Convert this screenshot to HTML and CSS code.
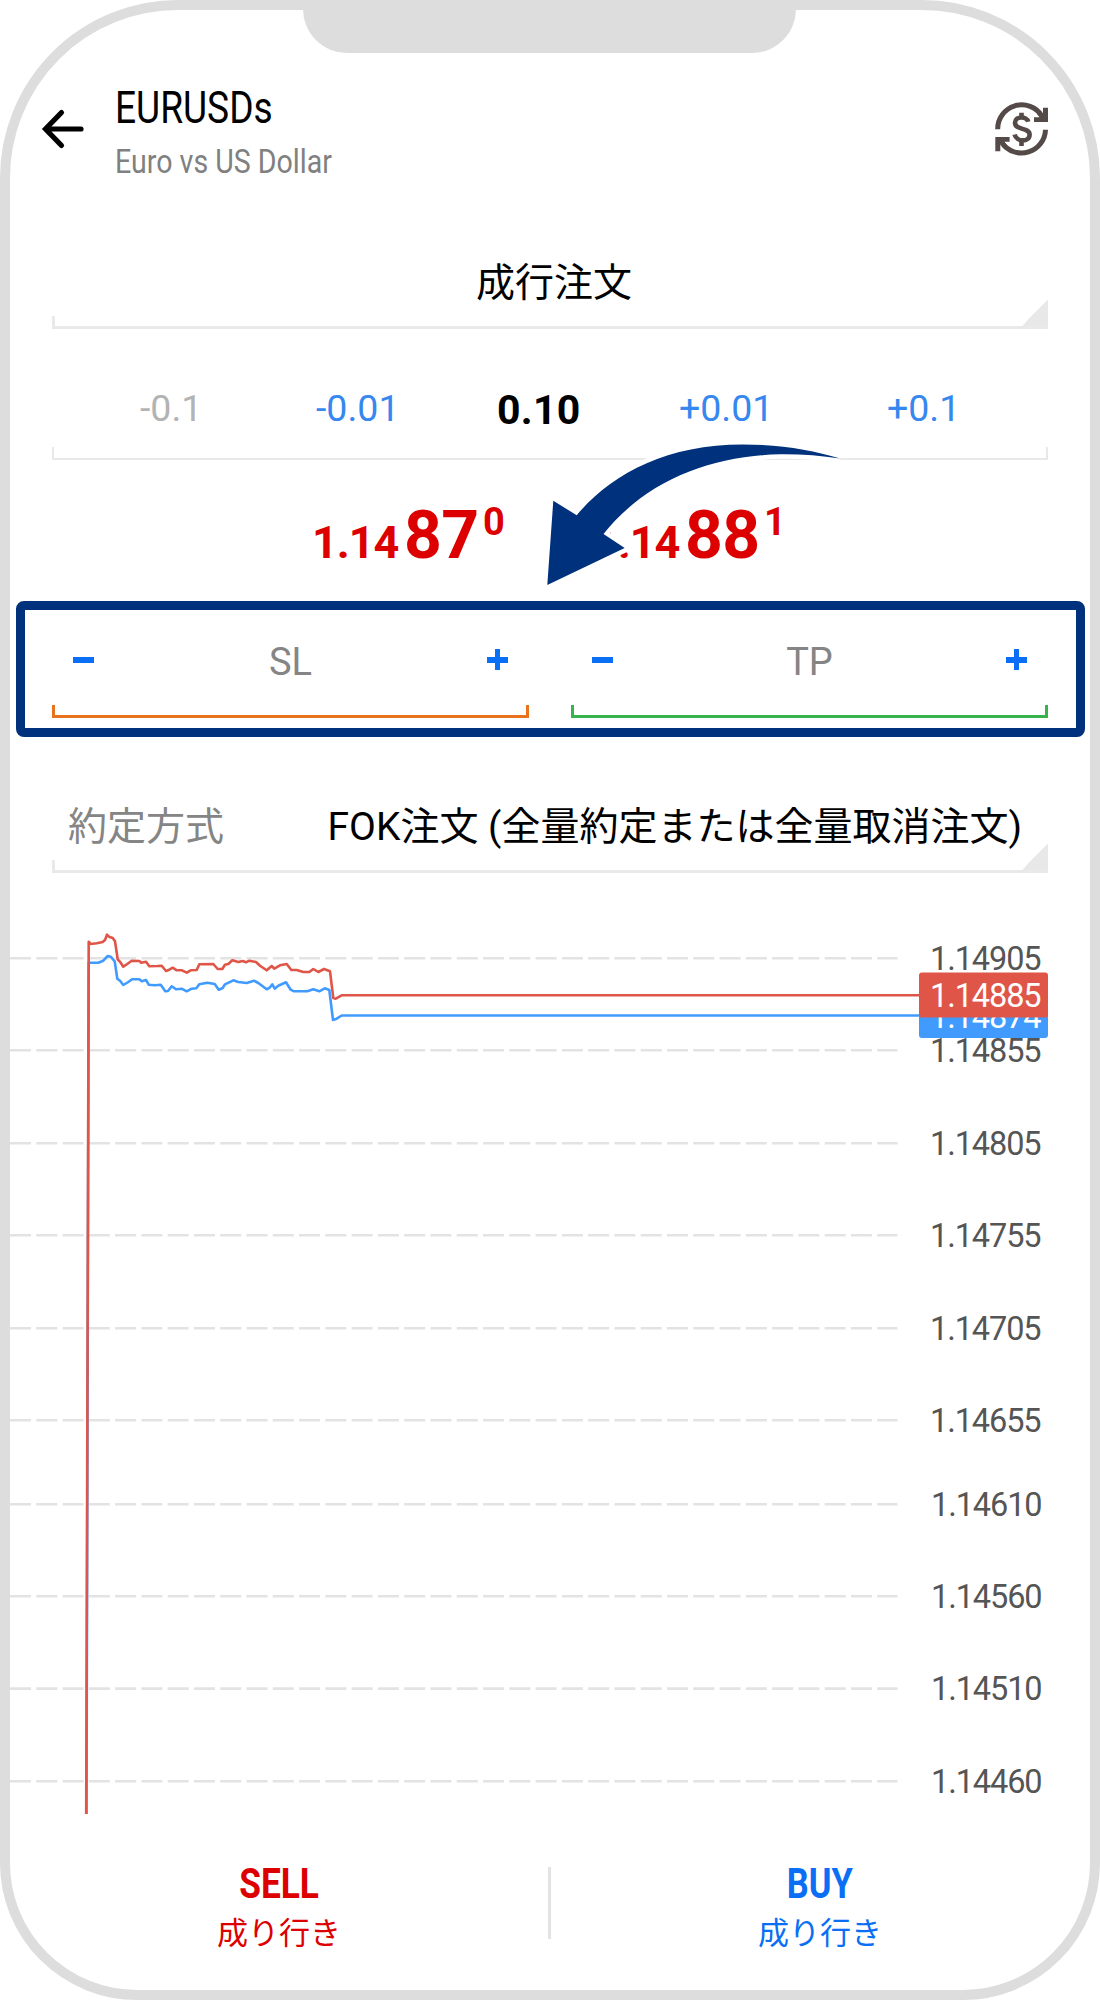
FILE: index.html
```
<!DOCTYPE html>
<html lang="ja">
<head>
  <meta charset="UTF-8">
  <meta name="viewport" content="width=device-width, initial-scale=1.0">
  <title>EURUSDs</title>
  <link rel="stylesheet" href="styles.css">
</head>
<body>
  <div class="phone">
    <div class="notch"></div>

    <!-- Header -->
    <header class="header">
      <svg class="back-icon" viewBox="0 0 46 44">
        <path d="M21.5 5.5 5.5 22l16 16.500M6 22h35" />
      </svg>
      <div class="symbol">
        <h1><span class="symbol-name">EURUSDs</span></h1>
        <p><span class="symbol-desc">Euro vs US Dollar</span></p>
      </div>
      <svg class="swap-icon" viewBox="15 12 54 55">
        <path d="M17.700 39.300A24 24 0 0 1 62 26M65.500 39.700A24 24 0 0 1 22 53" />
        <path class="fill" d="M63 25.500V17.700h5V32H54v-4.700h5.500L57 24l3.500-3zM20.300 53.700v7.500h-5V47h14.300v4.700h-5.300L27 55l-3.500 3z" />
        <path class="dollar" d="M48.200 31.800C46.800 25.800 35 26 35 32.700c0 8 14.600 4.400 14.600 12 0 7.700-13 7.600-15-.2M41.500 22.700V27M41.500 51v5" />
      </svg>
    </header>

    <!-- Order type -->
    <div class="field order-type">
      <div class="field-text center">成行注文</div>
      <div class="bracket select"></div>
    </div>

    <!-- Volume -->
    <div class="field volume">
      <div class="volume-row">
        <span class="step disabled">-0.1</span>
        <span class="step minus-small">-0.01</span>
        <span class="lot">0.10</span>
        <span class="step plus-small">+0.01</span>
        <span class="step plus-big">+0.1</span>
      </div>
      <div class="bracket thin"></div>
    </div>

    <!-- Bid / Ask -->
    <div class="prices">
      <div class="price"><span class="base">1.14</span><span class="big">87</span><span class="sup">0</span></div>
      <div class="price"><span class="base">1.14</span><span class="big">88</span><span class="sup">1</span></div>
    </div>

    <!-- SL / TP -->
    <div class="limits">
      <div class="limit">
        <div class="limit-row">
          <span class="minus"></span>
          <span class="limit-name">SL</span>
          <span class="plus"></span>
        </div>
        <div class="bracket sl"></div>
      </div>
      <div class="limit">
        <div class="limit-row">
          <span class="minus"></span>
          <span class="limit-name">TP</span>
          <span class="plus"></span>
        </div>
        <div class="bracket tp"></div>
      </div>
    </div>

    <!-- Fill policy -->
    <div class="field policy">
      <div class="field-text split">
        <span class="label">約定方式</span>
        <span class="value">FOK注文 (全量約定または全量取消注文)</span>
      </div>
      <div class="bracket select"></div>
    </div>

    <!-- Tick chart -->
    <svg class="chart" viewBox="10 873 1080 967">
      <g class="grid">
        <path d="M10 958.300H897.500M10 1050.300H897.500M10 1143.300H897.500M10 1235.300H897.500M10 1328.300H897.500M10 1420.300H897.500M10 1504.300H897.500M10 1596.300H897.500M10 1688.600H897.500M10 1781.300H897.500" />
      </g>
      <polyline class="bid" points="86.500,1814 88.700,962.700 98.300,962.700 103.300,960.700 107.700,956 110.700,956.700 114.700,961.300 117.300,978.700 120,980.700 123.300,985 128.300,982 132,979.300 139.300,979.300 141.700,981.300 146,980 148.700,984.700 155,985.300 160.700,984.700 165.300,991.300 168,991 171.700,986.300 176,989.300 181.700,988.700 186.700,991.300 191.700,988.700 196.300,988.300 199.300,984.300 207.300,982.700 214.700,984 218.700,989.700 222.700,988 225,984.300 233.300,980.300 238.300,982 246.700,983 254,980.700 258.300,983 266.700,989.300 270,987.300 272.300,984.300 274.700,988.700 278.300,985.700 286,982.300 290.700,989.700 294,991.300 307.300,991.300 313.300,989.300 319.300,991.300 324.700,988.300 329.300,990 333,1020 336.700,1018.700 341.700,1015.500 919,1015.500" />
      <polyline class="ask" points="86.200,1814 88.700,941.700 90.700,944 96.700,943.300 102.700,942 105,940 107,934.700 109,936.700 112.700,938 115,941.300 117.700,959.300 120.700,962.700 123.300,966.700 127.300,964 131.700,960.700 139.300,961 141.300,962.700 146,961.700 149.300,966.300 157.300,966 161.700,965.700 166,971 169.300,969.700 172.700,967.700 176.700,970.300 182,970.300 186.700,972.700 190.700,970.300 196.700,970 199.300,964.300 213.300,964 217.700,969 222.300,969 225,964.700 228.300,964 232.300,960.300 238.300,962 242.700,961 246,962.300 249.300,960.700 256,962 260,965.700 266.700,970.300 271.700,966 274.300,968.700 280,965.300 286.700,964 291.300,970 296.700,970 303.300,972 309.300,972 313.300,969 318.300,972 324,969 330,971.300 333.300,998 335.700,998.700 341.700,995.300 919,995.300" />
      <g class="axis">
        <text x="930" y="970">1.14905</text>
        <text x="930" y="1062">1.14855</text>
        <text x="930" y="1155">1.14805</text>
        <text x="930" y="1247">1.14755</text>
        <text x="930" y="1340">1.14705</text>
        <text x="930" y="1432">1.14655</text>
        <text x="931" y="1516">1.14610</text>
        <text x="931" y="1608">1.14560</text>
        <text x="931" y="1700">1.14510</text>
        <text x="931" y="1793">1.14460</text>
        <rect class="bid-badge" x="919" y="993" width="129" height="45" rx="3" />
        <text class="badge-text" x="930" y="1028">1.14874</text>
        <rect class="ask-badge" x="919" y="972.600" width="129" height="45" rx="3" />
        <text class="badge-text" x="930" y="1007">1.14885</text>
      </g>
    </svg>

    <!-- Footer -->
    <footer class="actions">
      <div class="action sell">
        <strong>SELL</strong>
        <span>成り行き</span>
      </div>
      <div class="divider"></div>
      <div class="action buy">
        <strong>BUY</strong>
        <span>成り行き</span>
      </div>
    </footer>

    <!-- Arrow pointing at SL / TP -->
    <svg class="pointer" viewBox="530 430 330 170">
      <path d="M547.300 585 553.300 500.700 576.700 515.300C610 475 665 444.500 743 444.500C780 444.500 812 450 840 458.600C820 455.500 800 454 780 454.300C708 456 645 482 603.500 534L624.700 548Z" />
    </svg>
  </div>
</body>
</html>
```
FILE: styles.css
```
/* General Styles */
* {
  box-sizing: border-box;
}

body {
  margin: 0;
  background: #fff;
  font-family: 'Roboto', 'Noto Sans CJK JP', sans-serif;
  color: #000;
}

h1, p {
  margin: 0;
}

/* Phone Frame */
.phone {
  position: relative;
  width: 1100px;
  height: 2000px;
  border: 10px solid #ddd;
  border-radius: 178px 178px 137px 137px;
  background: #fff;
}

.notch {
  position: absolute;
  top: -1px;
  left: 293px;
  width: 493px;
  height: 44px;
  border-radius: 0 0 46px 46px;
  background: #ddd;
}

/* Header */
.header {
  display: flex;
  align-items: flex-start;
  height: 240px;
  padding: 73px 42px 0 30px;
}

.back-icon {
  width: 46px;
  height: 44px;
  margin-top: 24px;
  fill: none;
  stroke: #000;
  stroke-width: 5.2;
  stroke-linecap: round;
}

.symbol {
  flex: 1;
  margin-left: 29px;
}

.symbol h1 {
  font-size: 45px;
  font-weight: 400;
  line-height: 50px;
}

.symbol p {
  margin-top: 5px;
  font-size: 33.5px;
  line-height: 48px;
  color: #808080;
}

.symbol-name, .symbol-desc {
  display: inline-block;
  transform: scaleX(0.825);
  transform-origin: left;
}

.symbol-desc {
  transform: scaleX(0.853);
}

.swap-icon {
  width: 54px;
  height: 55px;
  margin-top: 19px;
  margin-right: -1px;
  fill: none;
  stroke: #544a47;
  stroke-width: 5;
}

.swap-icon .fill {
  fill: #544a47;
  stroke: none;
}

.swap-icon .dollar {
  stroke-width: 4.6;
}

/* Fields */
.field {
  display: flex;
  flex-direction: column;
  justify-content: flex-end;
  padding: 0 42px;
}

.field-text {
  font-size: 39px;
  line-height: 50px;
}

.center {
  padding-left: 8px;
  text-align: center;
}

.bracket {
  height: 13px;
  border: 3px solid #e9e9e9;
  border-top: none;
}

.bracket.select {
  height: 29px;
  border-left: none;
  border-right: none;
  background:
    linear-gradient(#e9e9e9, #e9e9e9) left bottom / 3px 10px no-repeat,
    linear-gradient(134deg, transparent 50%, #e8e8e8 50.5%) right bottom / 26px 27px no-repeat;
}

.bracket.thin {
  border-width: 2px;
  border-top: none;
}

.bracket.sl {
  border-color: #e8731c;
}

.bracket.tp {
  border-color: #37b24d;
}

.order-type {
  height: 79px;
}

.order-type .field-text {
  margin-bottom: -8px;
}

/* Volume */
.volume {
  height: 131px;
}

.volume-row {
  display: flex;
  align-items: flex-start;
  height: 64px;
  padding-left: 88px;
  font-size: 37.5px;
  line-height: 50px;
  color: #3687f0;
}

.step {
  width: 176px;
}

.step.disabled {
  color: #b3b3b3;
}

.step.minus-small {
  width: 181px;
}

.lot {
  width: 182px;
  padding-top: 2px;
  font-size: 41px;
  font-weight: 700;
  letter-spacing: 0.3px;
  color: #000;
}

.step.plus-small {
  width: 208px;
}

.step.plus-big {
  width: auto;
}

/* Prices */
.prices {
  display: flex;
  height: 141px;
  padding: 41px 0 0 302px;
  color: #dc0000;
  font-weight: 700;
}

.price {
  display: flex;
  align-items: baseline;
  width: 281px;
  height: 70px;
  line-height: 70px;
}

.base {
  width: 92px;
  font-size: 45px;
  letter-spacing: -1.1px;
}

.big {
  width: 79px;
  font-size: 66px;
  letter-spacing: -0.7px;
}

.sup {
  position: relative;
  top: -23px;
  font-size: 38px;
}

/* SL / TP */
.limits {
  display: flex;
  gap: 42px;
  width: 1069px;
  height: 136px;
  margin-left: 6px;
  padding: 0 28px 0 27px;
  border: 9px solid #00317c;
  border-radius: 8px;
}

.limit {
  flex: 1;
}

.limit-row {
  display: flex;
  align-items: center;
  justify-content: space-between;
  height: 95px;
  padding: 8px 21px 0;
}

.limit-name {
  font-size: 38px;
  line-height: 50px;
  color: #858585;
}

.minus, .plus {
  width: 21px;
  height: 21px;
  margin-bottom: 4px;
  background: linear-gradient(#0a6ff5, #0a6ff5) center / 21px 6px no-repeat;
}

.plus {
  background:
    linear-gradient(#0a6ff5, #0a6ff5) center / 21px 6px no-repeat,
    linear-gradient(#0a6ff5, #0a6ff5) center / 5px 21px no-repeat;
}

/* Fill Policy */
.policy {
  height: 136px;
}

.policy .field-text {
  margin-bottom: -8px;
}

.split {
  display: flex;
  justify-content: space-between;
  padding: 0 26px 0 16px;
}

.label {
  color: #858585;
}

/* Chart */
.chart {
  display: block;
  width: 1080px;
  height: 967px;
}

.grid path {
  fill: none;
  stroke: #e3e3e3;
  stroke-width: 2.6;
  stroke-dasharray: 21 5.28;
}

.bid, .ask {
  fill: none;
  stroke: #419bff;
  stroke-width: 2.6;
  stroke-linejoin: round;
}

.ask {
  stroke: #df5648;
}

.axis text {
  font-size: 32.5px;
  letter-spacing: -1.1px;
  fill: #555;
}

.axis .badge-text {
  fill: #fff;
}

.bid-badge {
  fill: #419bff;
}

.ask-badge {
  fill: #df5648;
}

/* Footer */
.actions {
  display: flex;
  height: 150px;
}

.action {
  display: flex;
  flex-direction: column;
  align-items: center;
  width: 538px;
  padding-top: 19px;
  font-size: 31px;
  line-height: 49px;
}

.action strong {
  font-size: 42.5px;
  line-height: 50px;
  transform: scaleX(0.83);
}

.sell {
  color: #dc0000;
}

.buy {
  color: #0a6ff5;
}

.buy strong {
  transform: scaleX(0.81);
}

.divider {
  width: 3px;
  height: 72px;
  margin-top: 27px;
  background: #e3e3e3;
}

/* Pointer Arrow */
.pointer {
  position: absolute;
  top: 420px;
  left: 520px;
  width: 330px;
  height: 170px;
  overflow: visible;
  fill: #00317c;
  stroke: #fff;
  stroke-width: 9;
  paint-order: stroke;
}
```
